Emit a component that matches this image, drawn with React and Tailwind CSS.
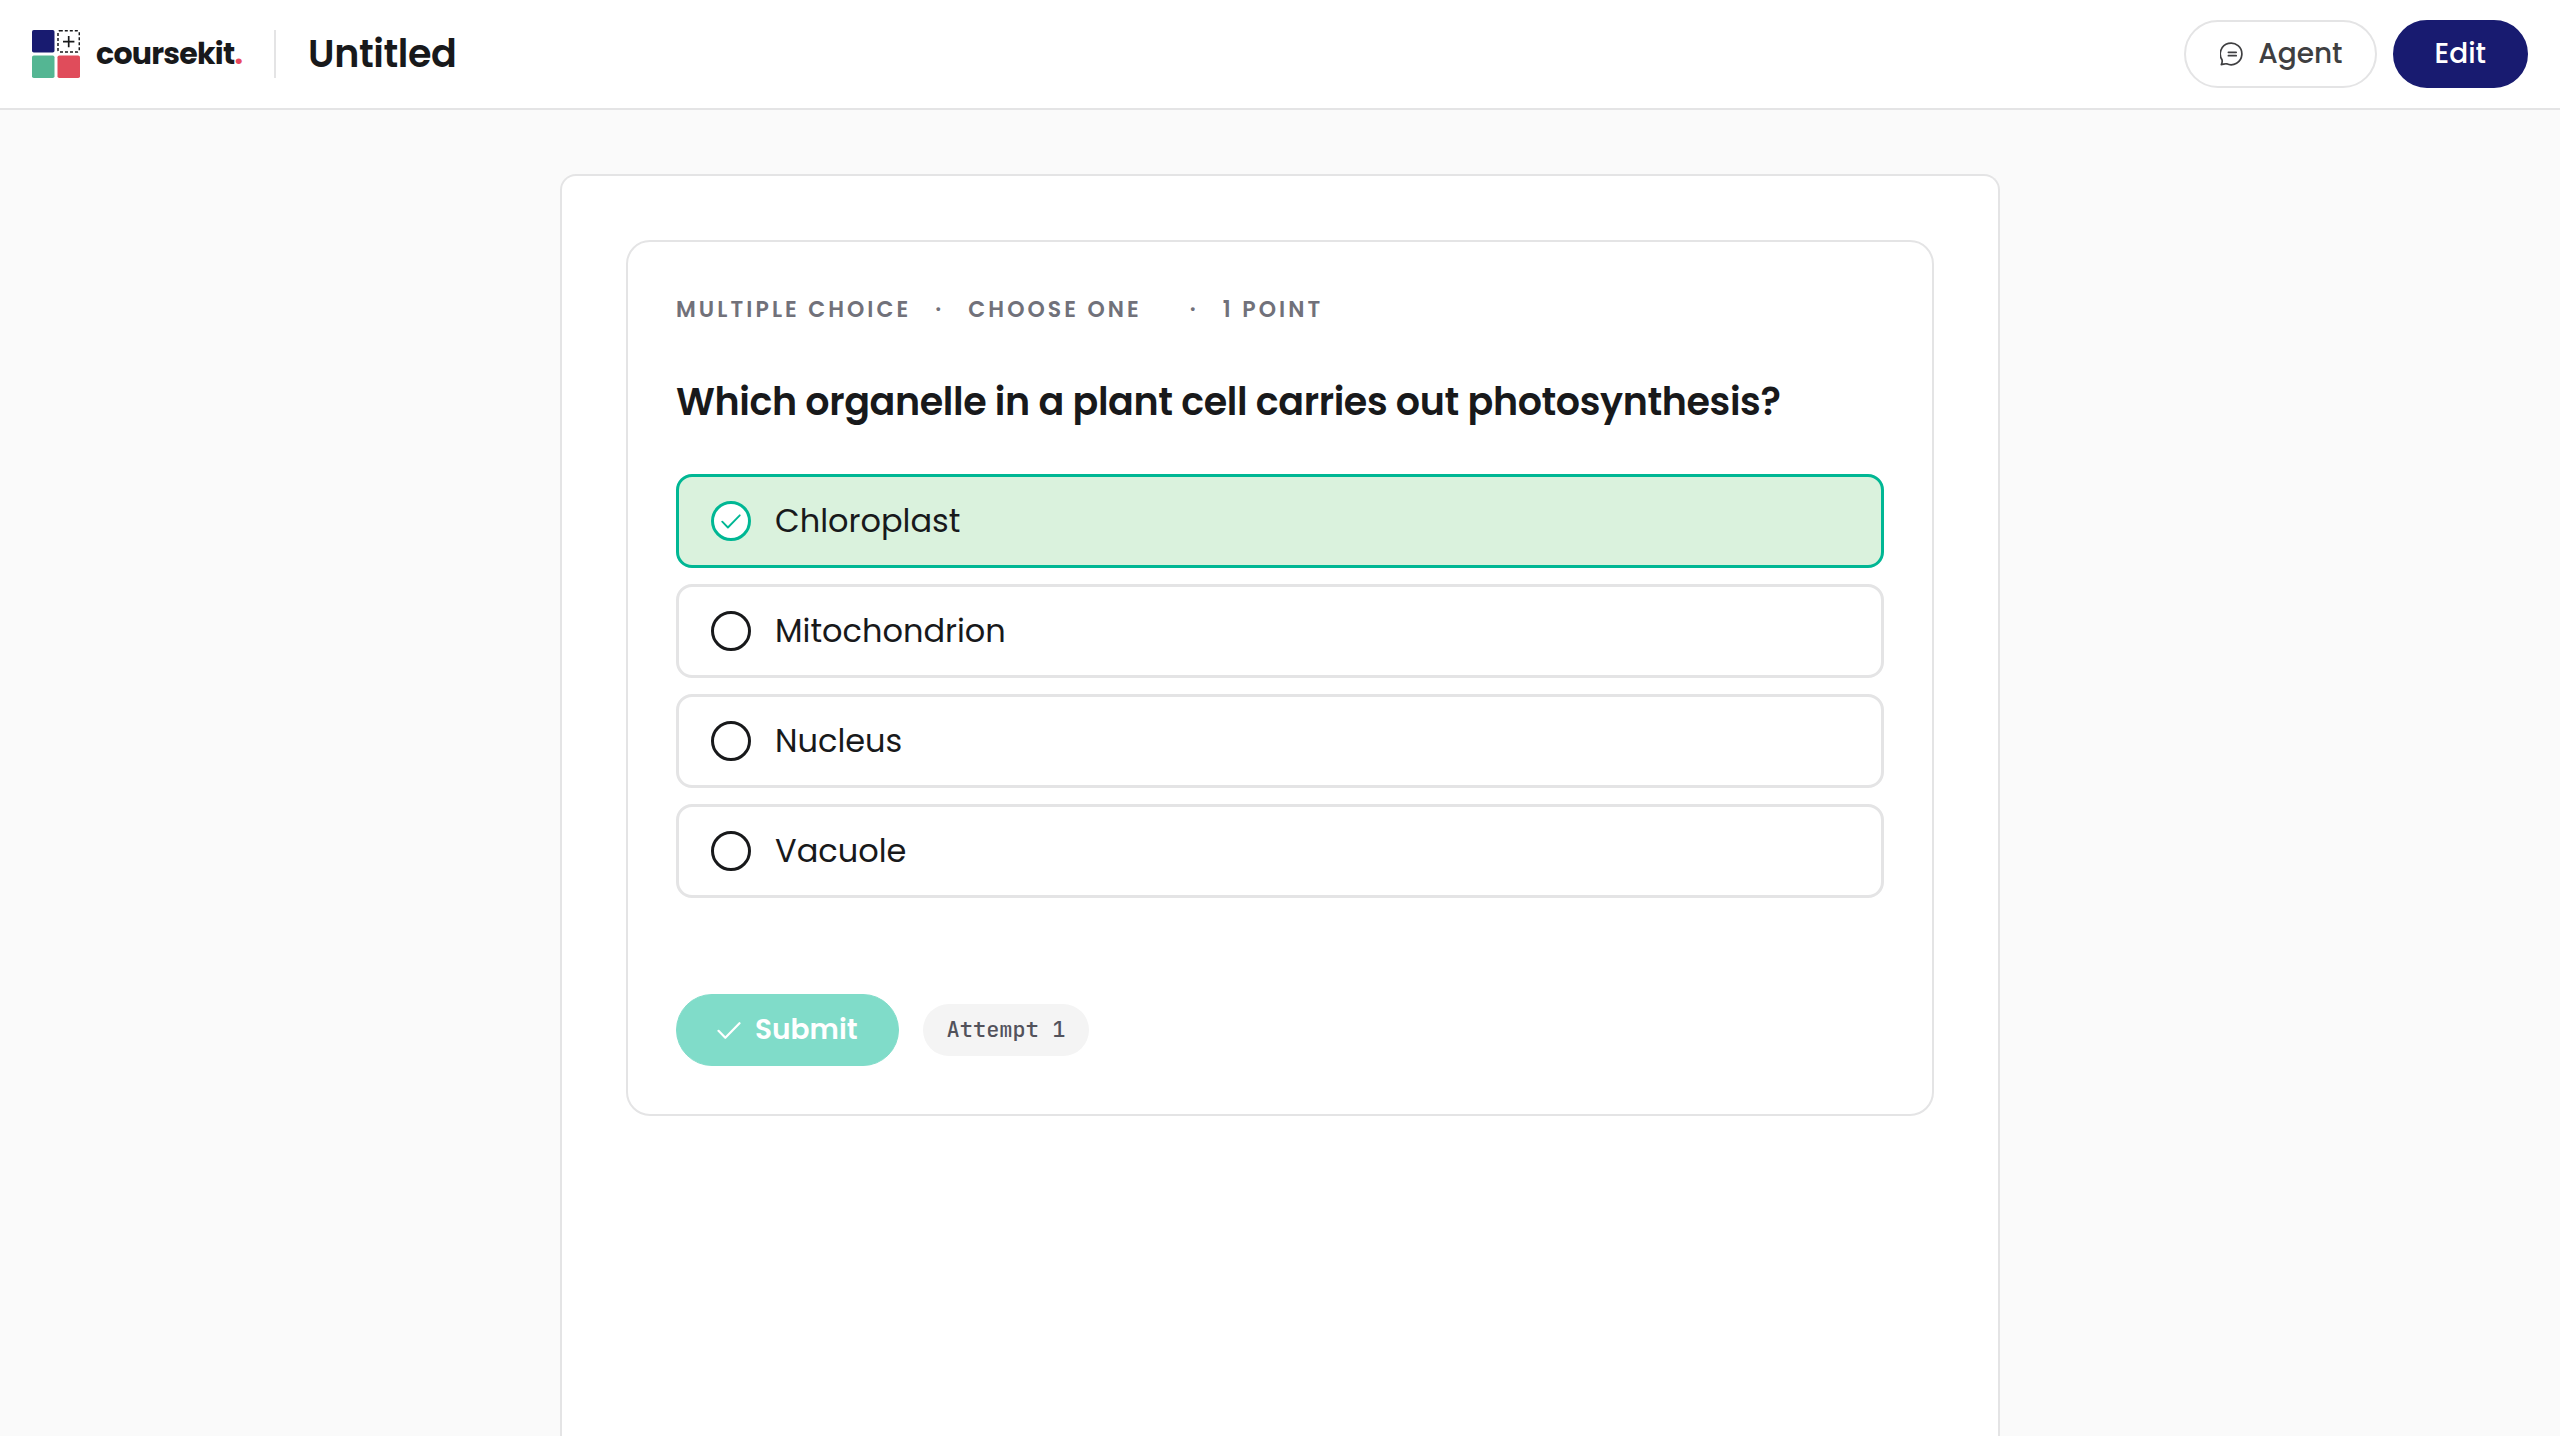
import { useState } from 'react'

const OPTIONS = ['Chloroplast', 'Mitochondrion', 'Nucleus', 'Vacuole']

function LogoMark() {
  return (
    <svg className="size-12 shrink-0" viewBox="0 0 48 48" fill="none" aria-hidden="true">
      <rect width="22.5" height="22.5" rx="1.8" fill="#181b70" />
      <rect x="26" y="0.7" width="21.3" height="21.3" rx="1.8" stroke="#18191b" strokeWidth="1.5" strokeDasharray="3 2" />
      <path d="M36.7 6v11.2M31 11.6h11.4" stroke="#18191b" strokeWidth="1.7" />
      <rect y="25.5" width="22.5" height="22.5" rx="1.8" fill="#54b693" />
      <rect x="25.5" y="25.5" width="22.5" height="22.5" rx="1.8" fill="#e04c5b" />
    </svg>
  )
}

function ChatIcon() {
  return (
    <svg className="size-6 shrink-0" viewBox="0 0 24 24" fill="none" stroke="currentColor" strokeWidth="1.7" strokeLinecap="round" strokeLinejoin="round" aria-hidden="true">
      <path d="M1.3 22.6c.9-1.6 1.1-3.2.7-4.800a10.800 10.800 0 1 1 4.700 4c-1.800-.4-3.600.800-5.400.800z" />
      <path d="M8.400 10.300h7.800M8.400 13.700h7.800" />
    </svg>
  )
}

function CheckIcon({ className }) {
  return (
    <svg className={className} viewBox="0 0 24 24" fill="none" stroke="currentColor" strokeWidth="2.2" strokeLinecap="round" strokeLinejoin="round" aria-hidden="true">
      <path d="M1.5 12.800 8.300 19.800 22.500 5.200" />
    </svg>
  )
}

function Header() {
  return (
    <header className="flex items-center justify-between border-b-2 border-[#e4e4e5] bg-white px-8 py-5">
      <div className="flex items-center gap-8">
        <a href="#" className="flex items-center gap-4">
          <LogoMark />
          <span className="text-[30px] leading-9 font-bold tracking-tight">
            coursekit<span className="text-[#e9495f]">.</span>
          </span>
        </a>
        <div className="h-12 w-0.5 bg-[#e4e4e5]" />
        <h1 className="text-[38px] leading-12 font-semibold tracking-[-0.01em]">Untitled</h1>
      </div>
      <div className="flex items-center gap-4">
        <button type="button" className="flex h-17 items-center gap-3.5 rounded-full border-2 border-[#e4e4e5] pr-8 pl-8.5 text-[28px] font-medium text-[#3f3f41]">
          <ChatIcon />
          Agent
        </button>
        <button type="button" className="h-17 rounded-full border-2 border-[#181b70] bg-[#181b70] px-10 text-[28px] font-medium text-white">
          Edit
        </button>
      </div>
    </header>
  )
}

function Option({ label, checked, onChange }) {
  return (
    <label
      className={`flex cursor-pointer items-center gap-6 rounded-2xl border-3 px-8 py-5 text-[32px] leading-12 ${
        checked ? 'border-[#00b794] bg-[#daf2dd]' : 'border-[#e4e4e5] bg-white'
      }`}
    >
      <span className="relative flex size-10 shrink-0">
        <input
          type="radio"
          name="organelle"
          value={label}
          checked={checked}
          onChange={onChange}
          className="size-10 appearance-none rounded-full border-3 border-[#18191b] bg-white checked:border-[#00b794]"
        />
        {checked && <CheckIcon className="pointer-events-none absolute inset-2.5 size-5 text-[#00b794]" />}
      </span>
      {label}
    </label>
  )
}

function Question() {
  const [answer, setAnswer] = useState('Chloroplast')

  return (
    <section className="rounded-3xl border-2 border-[#e4e4e5] bg-white p-12">
      <div className="flex items-center text-[22px] leading-10 font-semibold tracking-[0.14em] text-[#71717a] uppercase">
        <span>Multiple choice</span>
        <span className="px-6">·</span>
        <span>Choose one</span>
        <span className="pr-6 pl-12">·</span>
        <span>1 point</span>
      </div>

      <h2 id="question" className="mt-11 text-[38px] leading-14 font-semibold tracking-[-0.01em]">
        Which organelle in a plant cell carries out photosynthesis?
      </h2>

      <fieldset aria-labelledby="question" className="mt-11 flex flex-col gap-4">
        {OPTIONS.map(option => (
          <Option
            key={option}
            label={option}
            checked={answer === option}
            onChange={() => setAnswer(option)}
          />
        ))}
      </fieldset>

      <div className="mt-24 flex items-center gap-6">
        <button type="button" className="flex h-18 items-center gap-3.5 rounded-full border border-[#80dcc9] bg-[#80dcc9] px-10 text-[28px] font-semibold text-white">
          <CheckIcon className="size-6" />
          Submit
        </button>
        <span className="rounded-full bg-[#f4f4f4] px-6 py-2 font-['JetBrains_Mono','DejaVu_Sans_Mono',monospace] text-[22px] leading-9 font-medium text-[#52525b]">
          Attempt 1
        </span>
      </div>
    </section>
  )
}

export default function App() {
  return (
    <div className="flex min-h-screen flex-col bg-[#fafafa] font-['Poppins','Inter',sans-serif] text-[#18191b]">
      <Header />
      <main className="flex flex-1 flex-col px-8 pt-16">
        <div className="mx-auto w-full max-w-[1440px] flex-1 rounded-t-2xl border-2 border-b-0 border-[#e4e4e5] bg-white p-16">
          <Question />
        </div>
      </main>
    </div>
  )
}
